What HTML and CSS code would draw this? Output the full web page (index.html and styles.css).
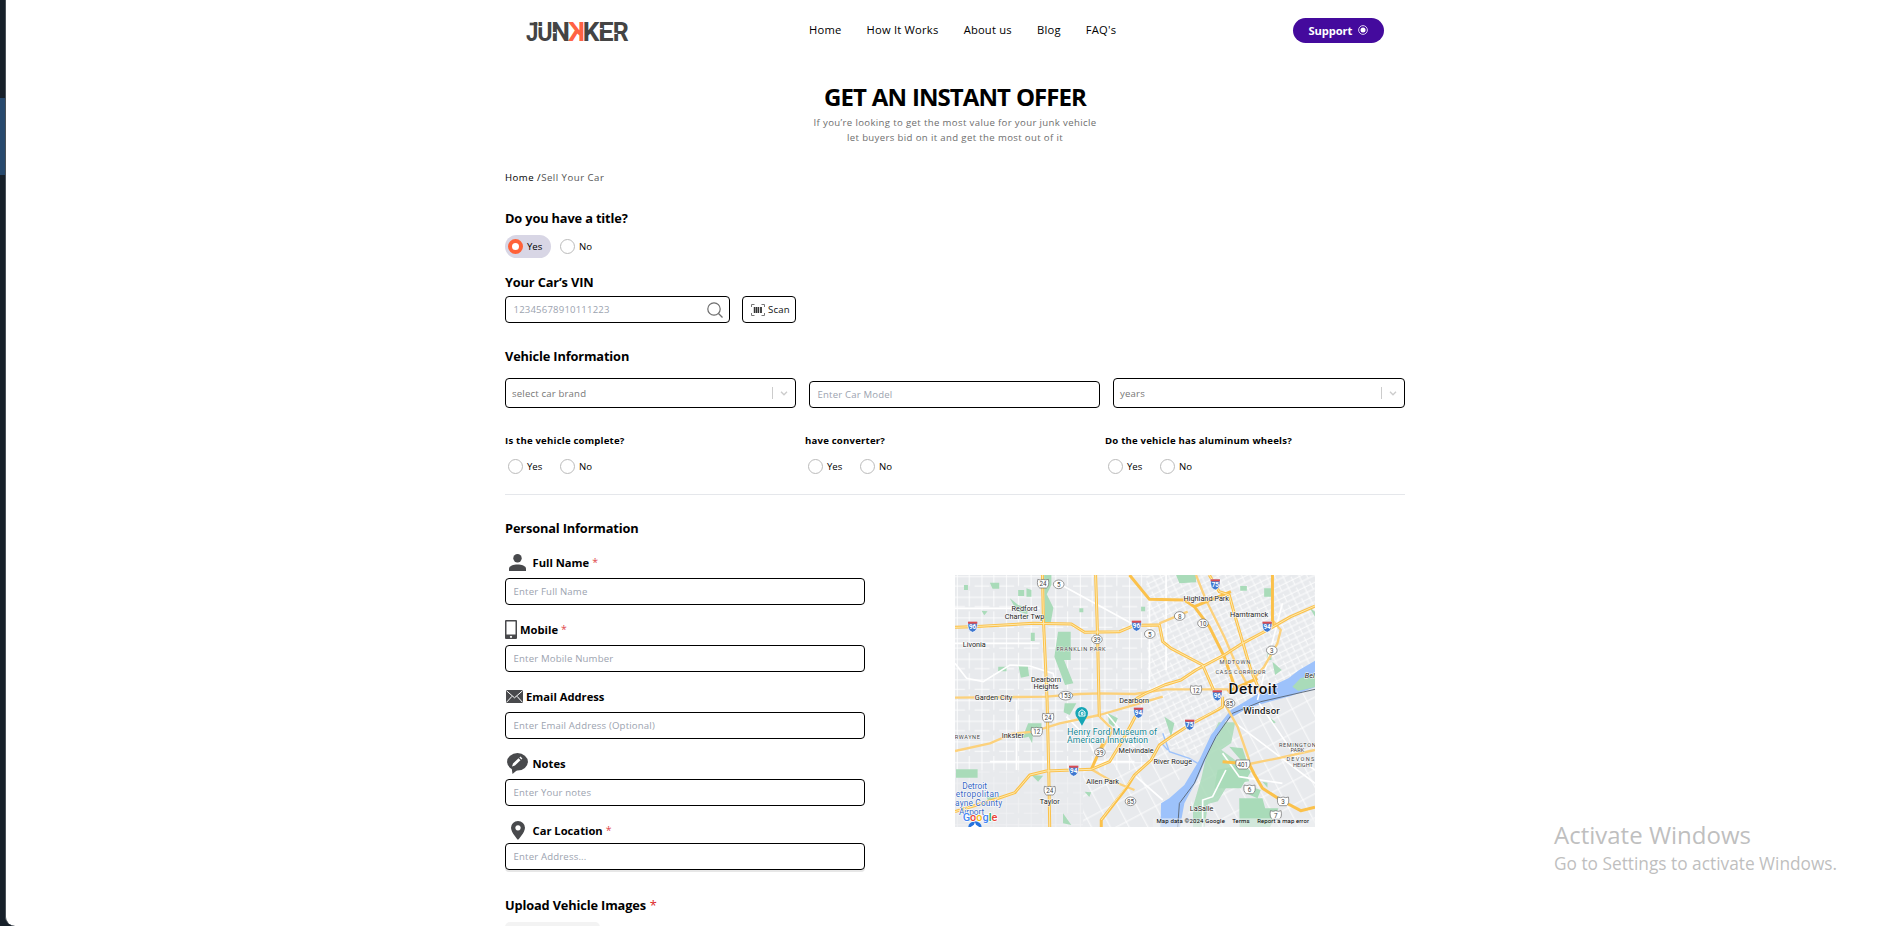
FILE: index.html
```html
<!DOCTYPE html>
<html lang="en">
<head>
<meta charset="utf-8">
<title>Junkker - Sell Your Car</title>
<link rel="stylesheet" href="styles.css">
</head>
<body>
<div class="desktop"><div class="taskbar-item"></div></div>
<div class="page">
<header class="header">
  <svg class="logo" viewBox="0 0 306 60" aria-label="Junkker">
    <g class="logo-text">
      <text x="0" y="58" textLength="37" lengthAdjust="spacingAndGlyphs">J</text>
      <text x="34" y="58" textLength="46" lengthAdjust="spacingAndGlyphs">U</text>
      <text x="76" y="58" textLength="56" lengthAdjust="spacingAndGlyphs">N</text>
      <text class="logo-accent" transform="translate(177 58) scale(-1 1)" x="0" y="0" textLength="50" lengthAdjust="spacingAndGlyphs">K</text>
      <text x="170" y="58" textLength="50" lengthAdjust="spacingAndGlyphs">K</text>
      <text x="217" y="58" textLength="46" lengthAdjust="spacingAndGlyphs">E</text>
      <text x="260" y="58" textLength="48" lengthAdjust="spacingAndGlyphs">R</text>
    </g>
    <path d="M36 14h14M78 32h12M218 20h12M260 34h14" stroke="#fff" stroke-width="4"/>
    <path d="M11 6h23" stroke="#444" stroke-width="8"/>
  </svg>
  <nav class="nav"><a>Home</a><a>How It Works</a><a>About us</a><a>Blog</a><a>FAQ's</a></nav>
  <button class="support"><span>Support</span>
    <svg width="10" height="10" viewBox="0 0 10 10"><circle cx="5" cy="5" r="4.4" fill="none" stroke="#d9cbee" stroke-width="1"/><circle cx="5" cy="5" r="2.5" fill="#fff"/></svg>
  </button>
</header>
<main class="main">
  <h1 class="title">GET AN INSTANT OFFER</h1>
  <p class="subtitle">If you’re looking to get the most value for your junk vehicle<br>let buyers bid on it and get the most out of it</p>
  <div class="crumbs"><b>Home /</b><span>Sell Your Car</span></div>

  <h2 class="heading h-title">Do you have a title?</h2>
  <div class="radios first">
    <label class="radio on"><i></i><span>Yes</span></label><label class="radio"><i></i><span>No</span></label>
  </div>
  <h2 class="heading h-vin">Your Car’s VIN</h2>
  <div class="vin">
    <div class="field vin-input"><span>12345678910111223</span>
      <svg width="16" height="16" viewBox="0 0 16 16" fill="none" stroke="#6d6d6d" stroke-width="1.2"><circle cx="7" cy="7" r="6.2"/><path d="M11.5 11.5l4 4"/></svg>
    </div>
    <div class="field scan">
      <svg width="14" height="12" viewBox="0 0 14 12" fill="none" stroke="#333"><path d="M.5 3V.5h3M10.500 .5h3V3M.5 9v2.500h3M10.500 11.500h3V9" stroke="#777"/><path d="M3.500 3v6M7.500 3v6" stroke-width="1.400"/><path d="M5.500 3v6M10 3v6" stroke-width="1.800"/></svg>
      <span>Scan</span>
    </div>
  </div>
  <h2 class="heading h-vehicle">Vehicle Information</h2>
  <div class="vehicle">
    <div class="field select"><span>select car brand</span><em></em><svg width="8" height="5" viewBox="0 0 8 5"><path d="M1 .8l3 3 3-3" fill="none" stroke="#ccc" stroke-width="1.300"/></svg></div>
    <div class="field"><span>Enter Car Model</span></div>
    <div class="field select"><span>years</span><em></em><svg width="8" height="5" viewBox="0 0 8 5"><path d="M1 .8l3 3 3-3" fill="none" stroke="#ccc" stroke-width="1.300"/></svg></div>
  </div>
  <div class="questions">
    <div><h3>Is the vehicle complete?</h3><div class="radios"><label class="radio"><i></i><span>Yes</span></label><label class="radio"><i></i><span>No</span></label></div></div>
    <div><h3>have converter?</h3><div class="radios"><label class="radio"><i></i><span>Yes</span></label><label class="radio"><i></i><span>No</span></label></div></div>
    <div><h3>Do the vehicle has aluminum wheels?</h3><div class="radios"><label class="radio"><i></i><span>Yes</span></label><label class="radio"><i></i><span>No</span></label></div></div>
  </div>
  <h2 class="heading h-personal">Personal Information</h2>
  <div class="personal">
    <div class="form">
      <div class="group">
        <div class="label"><svg class="ic-user" width="17" height="17" viewBox="0 0 17 17"><circle cx="8.500" cy="4.200" r="4.200"/><path d="M0 17v-2.400C0 11.800 4.500 10.400 8.500 10.400s8.500 1.400 8.500 4.200V17z"/></svg><span>Full Name</span><sup>*</sup></div>
        <div class="field"><span>Enter Full Name</span></div>
      </div>
      <div class="group">
        <div class="label"><svg class="ic-phone" width="12" height="19" viewBox="0 0 12 19"><path fill-rule="evenodd" d="M1 0h10q1 0 1 1v17q0 1-1 1H1q-1 0-1-1V1q0-1 1-1zM1.500 1.500v13h9v-13zM6 15.700a1.100 1.100 0 1 0 .01 0z"/></svg><span>Mobile</span><sup>*</sup></div>
        <div class="field"><span>Enter Mobile Number</span></div>
      </div>
      <div class="group">
        <div class="label"><svg class="ic-mail" width="17" height="13" viewBox="0 0 17 13"><rect width="17" height="13" rx="1"/><path d="M.5.8l8 7 8-7M.5 12.300l5.500-6M16.500 12.300l-5.500-6" fill="none" stroke="#fff" stroke-width="1"/></svg><span>Email Address</span></div>
        <div class="field"><span>Enter Email Address (Optional)</span></div>
      </div>
      <div class="group">
        <div class="label"><svg class="ic-note" width="21" height="21" viewBox="0 0 21 21"><ellipse cx="10.500" cy="8.800" rx="10.400" ry="8.700"/><path d="M4.500 14l1 7 6-5z"/><path d="M5 13.500l1-3 5.500-5.300 2 2L8 12.500zM12.400 4.400l1-1 2 2-1 1z" fill="#fff"/></svg><span>Notes</span></div>
        <div class="field"><span>Enter Your notes</span></div>
      </div>
      <div class="group last">
        <div class="label"><svg class="ic-pin" width="14" height="19" viewBox="0 0 14 19"><path fill-rule="evenodd" d="M7 0a7 6.800 0 0 1 7 6.800C14 11.500 7 19 7 19S0 11.500 0 6.800A7 6.800 0 0 1 7 0zm0 4.200a2.700 2.700 0 1 0 .01 0z"/></svg><span>Car Location</span><sup>*</sup></div>
        <div class="field"><span>Enter Address...</span></div>
      </div>
    </div>
    <svg class="map" width="360" height="252" viewBox="15 15 1083 756" preserveAspectRatio="none">
      <defs>
        <pattern id="gridWest" width="74" height="62" patternUnits="userSpaceOnUse"><path d="M0 20h74M0 48h45M22 0v62M58 0v48" class="minor"/></pattern>
        <pattern id="gridCity" width="44" height="36" patternUnits="userSpaceOnUse" patternTransform="rotate(-26)"><path d="M0 10h44M0 27h44M12 0v36M33 0v27" class="minor"/></pattern>
        <pattern id="gridSouth" width="50" height="64" patternUnits="userSpaceOnUse" patternTransform="rotate(-28)"><path d="M0 20h50M14 0v64" class="minor"/></pattern>
        <g id="interstate"><path d="M-14-15h28q3 28-14 32q-17-4-14-32z" fill="#3f78d0" stroke="#fff" stroke-width="2"/><path d="M-14-15h28v6h-28z" fill="#dc4c50"/></g>
        <g id="usroute"><path d="M-16-13q8 4 16 0q8 4 16 0q4 20-6 26h-20q-10-6-6-26z" fill="#fff" stroke="#666" stroke-width="2"/></g>
        <g id="state"><ellipse rx="16" ry="13" fill="#fff" stroke="#666" stroke-width="2"/></g>
      </defs>
      <rect x="15" y="15" width="1083" height="756" fill="#e8eaed"/>
      <path d="M15 15H600V600H15z" fill="url(#gridWest)"/>
      <path d="M15 600H400V771H15z" fill="url(#gridWest)" opacity=".35"/>
      <path d="M590 15H1098V300L960 365L820 430L740 560L600 500z" fill="url(#gridCity)"/>
      <path d="M600 500L740 560L640 700V771H400V600z" fill="url(#gridSouth)"/>
      <path d="M900 410L1098 350V771H705L745 625L830 450z" fill="url(#gridSouth)"/>
      <g fill="#a9dbb9">
        <path d="M283 15h22v30l-14 28 20 40-8 45h-18zM325 185h38v85l-20 0 28 70-25 5-32-85z"/>
        <path d="M180 85l25 20 28 8v20l-32-10zM205 60h18v18h-18zM230 55l15 5v20h-15zM120 38h28v18h-20zM42 45h12v15h-12zM95 122l18 2-10 12zM243 188h12v25h-12zM206 288h28l4 30-25 5zM145 290h25v14h-25zM389 115h12v12h-12z"/>
        <path d="M235 460l40 0 0 30-25 0-3 30-10-20-20 5zM345 400h35l-20 35-18-8zM475 430l30 15-12 25-15-10zM18 598h65v25H18zM245 615l35 2-15 18zM405 665l20 2-6 14zM110 680h35v15h-30zM340 730l25 35-25-5z"/>
        <path d="M680 15h60v22l-50 3zM873 48h20v14h-20zM945 55h28v25h-28zM575 110h12v14h-12zM940 635l15 3v15zM970 275l28 25-20 15zM955 240h12v30h-12zM1080 110l18 15v15zM645 440l30 20-10 40zM965 445l15 12-10 6z"/>
        <path d="M780 515l28-58 50 0-12 62-30 20 60 45 25 50-65 10-30 50-30 8-10 70h-35v-62l25-85z" opacity=".85"/>
        <path d="M840 530l40 5 15 45-90 20-10 55 80 0 30-50zM870 685h70l8 30 40 0-25 56h-92zM905 650l30 10-10 25-35-15z"/>
      </g>
      <path d="M1098 272L1050 300 1018 325 975 345 920 375 845 420 785 495 750 570 705 645 660 685 635 700 633 771H692L705 700 745 625 785 530 830 452 895 415 960 395 1025 378 1098 352z" fill="#9dc2fb"/>
      <path d="M1030 350l24-25 44-12v38l-50 12z" fill="#a9dbb9"/>
      <path d="M640 490l20 55 60 20 25 15M655 540l-20-22" fill="none" stroke="#9dc2fb" stroke-width="4"/>
      <path d="M1098 358L935 395 850 430 800 500 765 570 735 640 690 700 685 771" fill="none" stroke="#5f6d80" stroke-width="3"/>
      <g fill="none" stroke="#fff" stroke-width="5">
        <path d="M335 45L555 165M15 280L50 325 100 335 180 285 240 288 310 310 320 350M15 115H270M15 220H270M120 575H555M200 390V600M350 440L410 500 440 560M470 430L555 530M830 600L790 680 760 690V771M820 550L870 620 1000 640M860 460L1098 640M930 400L1040 560 1098 600M560 620L640 690M1000 100L925 390M650 15V300M600 90V340"/>
      </g>
      <g class="road-light">
        <path d="M740 15L770 90 825 200 855 270 905 365M15 543L120 520 185 492 250 485 330 460 450 435 570 400 640 380M15 383L290 380 390 372 450 370 555 372 650 358H840M630 160L715 125M970 150L995 180 985 220 945 290 915 325M455 540L490 480 450 440M425 598L480 630 555 660"/>
        <path d="M820 390L865 470 900 570M900 582L985 565 1098 540"/>
      </g>
      <g class="road">
        <path d="M15 172L70 170 250 160 365 162 405 187 510 185 555 166 630 165 640 215 665 235 760 285 795 365"/>
        <path d="M278 15L281 150 292 390 297 600 300 771M438 15L444 200 449 440"/>
        <path d="M15 725L130 690 195 668 240 615 290 603 425 598 480 575 520 510 560 435M535 400L585 372 645 345 695 330 740 300 825 255 880 220 955 180 1025 140 1098 108"/>
        <path d="M780 15L810 65 840 75 855 130 880 215 905 300 935 370M820 380V410L805 420 720 465 665 500 630 525 605 570 555 615 530 655 455 750V771"/>
        <path d="M540 15L600 88 705 90 735 110 780 170 825 260 860 360M735 110L845 65M970 15V165M425 598L460 520M835 365L925 325"/>
        <path d="M820 575L900 582 915 612 940 655 995 690 1055 722 1098 712"/>
      </g>
      <g class="road-core">
        <path d="M15 172L70 170 250 160 365 162 405 187 510 185 555 166 630 165 640 215 665 235 760 285 795 365M278 15L281 150 292 390 297 600 300 771M438 15L444 200 449 440M15 725L130 690 195 668 240 615 290 603 425 598 480 575 520 510 560 435M535 400L585 372 645 345 695 330 740 300 825 255 880 220 955 180 1025 140 1098 108M780 15L810 65 840 75 855 130 880 215 905 300 935 370M820 380V410L720 465 630 525 605 570 555 615 455 750"/>
      </g>
      <g class="shields">
        <use href="#interstate" x="68" y="170"/><text x="68" y="178" class="w">96</text>
        <use href="#interstate" x="561" y="167"/><text x="561" y="175" class="w">96</text>
        <use href="#interstate" x="798" y="43"/><text x="798" y="51" class="w">75</text>
        <use href="#interstate" x="954" y="170"/><text x="954" y="178" class="w">94</text>
        <use href="#interstate" x="804" y="376"/><text x="804" y="384" class="w">96</text>
        <use href="#interstate" x="567" y="428"/><text x="567" y="436" class="w">94</text>
        <use href="#interstate" x="721" y="464"/><text x="721" y="472" class="w">75</text>
        <use href="#interstate" x="372" y="602"/><text x="372" y="610" class="w">94</text>
        <use href="#usroute" x="280" y="41"/><text x="280" y="49">24</text>
        <use href="#usroute" x="295" y="443"/><text x="295" y="451">24</text>
        <use href="#usroute" x="300" y="662"/><text x="300" y="670">24</text>
        <use href="#usroute" x="261" y="485"/><text x="261" y="493">12</text>
        <use href="#usroute" x="740" y="360"/><text x="740" y="368">12</text>
        <use href="#state" x="327" y="43"/><text x="327" y="51">5</text>
        <use href="#state" x="442" y="208"/><text x="442" y="216">39</text>
        <ellipse cx="348" cy="377" rx="21" ry="13" fill="#fff" stroke="#666" stroke-width="2"/><text x="348" y="384">153</text>
        <use href="#state" x="601" y="192"/><text x="601" y="200">5</text>
        <use href="#state" x="691" y="138"/><text x="691" y="146">8</text>
        <use href="#state" x="761" y="160"/><text x="761" y="168">10</text>
        <use href="#state" x="968" y="241"/><text x="968" y="249">3</text>
        <use href="#state" x="841" y="400"/><text x="841" y="408">85</text>
        <use href="#state" x="451" y="547"/><text x="451" y="555">39</text>
        <use href="#state" x="543" y="694"/><text x="543" y="702">85</text>
        <path d="M861 570h40q5 20-8 27h-24q-13-7-8-27z" fill="#fff" stroke="#666" stroke-width="2"/><text x="881" y="591">401</text>
        <use href="#usroute" x="901" y="658"/><text x="901" y="666">6</text>
        <use href="#usroute" x="1002" y="694"/><text x="1002" y="702">3</text>
        <use href="#usroute" x="980" y="735"/><text x="980" y="743">7</text>
      </g>
      <g class="places">
        <text x="224" y="123">Redford</text><text x="224" y="146">Charter Twp</text>
        <text x="73" y="232">Livonia</text><text x="289" y="335">Dearborn</text><text x="289" y="358">Heights</text>
        <text x="131" y="389">Garden City</text><text x="554" y="400">Dearborn</text>
        <text x="189" y="505">Inkster</text><text x="560" y="548">Melvindale</text>
        <text x="459" y="641">Allen Park</text><text x="300" y="703">Taylor</text>
        <text x="771" y="94">Highland Park</text><text x="900" y="140">Hamtramck</text>
        <text x="670" y="582">River Rouge</text><text x="757" y="722">LaSalle</text>
        <text x="1082" y="325" font-style="italic">Bel</text>
      </g>
      <g class="areas">
        <text x="394" y="243" textLength="148">FRANKLIN PARK</text><text x="857" y="282" textLength="92">MIDTOWN</text><text x="874" y="311" textLength="150">CASS CORRIDOR</text>
        <text x="52" y="507" textLength="76">RWAYNE</text><text x="1045" y="531" textLength="110">REMINGTON</text><text x="1045" y="547">PARK</text><text x="1062" y="572" textLength="100">DEVONSH</text><text x="1062" y="590">HEIGHT</text>
      </g>
      <text x="911" y="373" class="city" textLength="146">Detroit</text>
      <text x="937" y="432" class="town" textLength="110">Windsor</text>
      <g class="poi"><text x="488" y="494" textLength="270">Henry Ford Museum of</text><text x="474" y="520" textLength="244">American Innovation</text></g>
      <path d="M397 467L385 447Q377 440 377 430a19 19 0 0 1 38 0q0 10-7 17z" fill="#16a6b6"/>
      <path d="M388 438v-12l9-7 9 7v12zM395 427h5v6h-5z" fill="none" stroke="#fff" stroke-width="3"/>
      <g class="airport"><text x="74" y="656">Detroit</text><text x="82" y="682" textLength="130">etropolitan</text><text x="86" y="709" textLength="142">ayne County</text><text x="65" y="735">Airport</text></g>
      <path d="M55 771a20 17 0 0 1 40 0z" fill="#2673df"/><path d="M75 756l-3 8-10 7h26l-10-7z" fill="#fff"/>
      <rect x="610" y="745" width="488" height="26" fill="#eef0f1" opacity=".6"/>
      <text x="38" y="753" class="google"><tspan fill="#4285f4">G</tspan><tspan fill="#ea4335">o</tspan><tspan fill="#fbbc05">o</tspan><tspan fill="#4285f4">g</tspan><tspan fill="#34a853">l</tspan><tspan fill="#ea4335">e</tspan></text>
      <g class="credits"><text x="621" y="760" textLength="206">Map data ©2024 Google</text><text x="849" y="760" textLength="52">Terms</text><text x="924" y="760" textLength="156">Report a map error</text></g>
    </svg>
  </div>
  <h2 class="heading h-upload">Upload Vehicle Images<b>*</b></h2>
  <div class="upload"></div>
</main>
</div>
<div class="watermark"><p class="w1">Activate Windows</p><p class="w2">Go to Settings to activate Windows.</p></div>
</body>
</html>
```
FILE: styles.css
```css
* { box-sizing: border-box; }
body, h1, h2, h3, p { margin: 0; }
body { height: 926px; overflow: hidden; background: #17202a; font-family: "Open Sans", "Noto Sans", sans-serif; color: #000; font-size: 9.6px; white-space: nowrap; }
.desktop { position: absolute; left: 0; top: 0; width: 6px; height: 926px; padding-top: 98px; }
.taskbar-item { height: 77px; background: #27496d; }
.page { position: relative; margin-left: 5px; height: 926px; background: #fff; border-left: 1px solid #4a5158; border-bottom-left-radius: 10px 9px; overflow: hidden; }
.header { height: 61px; margin-left: 520px; width: 858px; display: flex; align-items: center; }
.logo { width: 102px; height: 20px; margin-top: 3px; overflow: visible; }
.logo-text { font: 700 80px "Roboto", sans-serif; fill: #444; }
.logo-accent { fill: #ff6243; }
.nav { display: flex; gap: 25.2px; margin: -2px 0 0 181px; font-size: 11.2px; font-weight: 500; letter-spacing: .2px; }
.support { margin-left: auto; width: 91px; height: 25px; border: 0; border-radius: 13px; background: #440a9d; color: #fff; font: 700 11.2px "Open Sans", sans-serif; letter-spacing: -.1px; display: flex; align-items: center; gap: 6px; padding: 0 0 1px 15.5px; }
.main { margin-left: 499px; width: 900px; }
.title { font-size: 24px; line-height: 32px; font-weight: 700; letter-spacing: -.93px; word-spacing: .6px; text-align: center; margin-top: 20px; }
.subtitle { font-size: 9.6px; line-height: 15px; text-align: center; color: #6e6e6e; font-weight: 500; letter-spacing: .36px; margin-top: 2px; }
.crumbs { line-height: 16px; margin-top: 25px; display: flex; color: #555; letter-spacing: .5px; }
.crumbs b { font-weight: 500; color: #000; }
.heading { font-size: 12.8px; line-height: 20px; font-weight: 700; letter-spacing: -.15px; }
.h-title { margin-top: 22px; }
.radios { display: flex; gap: 6px; height: 23px; }
.radios.first { margin-top: 7px; }
.radio { display: flex; align-items: center; width: 46px; height: 23px; border-radius: 12px; padding-left: 3px; gap: 4px; }
.radio i { width: 15px; height: 15px; border: 1px solid #bbb; border-radius: 50%; background: #fff; }
.radio.on { background: #d8d6e5; }
.radio.on i { border: 4.5px solid #ff6138; }
.h-vin { margin-top: 14px; }
.field { height: 27px; border: 1px solid #000; border-radius: 4px; background: #fff; display: flex; align-items: center; padding: 0 7.5px; color: #9ca3af; letter-spacing: .17px; }
.vin { display: flex; gap: 12px; margin-top: 4px; }
.vin-input { width: 225px; justify-content: space-between; padding-right: 6.5px; }
.scan { width: 54px; padding: 0 0 0 8px; gap: 3px; color: #111; }
.h-vehicle { margin-top: 23px; }
.vehicle { display: grid; grid-template-columns: 291px 291px 292px; gap: 13px; align-items: end; margin-top: 12px; }
.select { height: 30px; color: #777; padding: 0 7px 0 6px; }
.select em { margin-left: auto; width: 1px; height: 12px; background: #ccc; margin-right: 7px; }
.questions { display: grid; grid-template-columns: repeat(3, 1fr); height: 87px; border-bottom: 1px solid #e5e7eb; padding-top: 24px; }
.questions h3 { font-size: 9.6px; line-height: 17px; font-weight: 700; letter-spacing: .2px; }
.questions .radios { margin-top: 6px; }
.h-personal { margin-top: 23px; }
.personal { display: flex; height: 334px; margin-top: 14px; }
.form { width: 360px; }
.group { height: 67px; }
.label { height: 21px; margin-bottom: 5px; display: flex; align-items: center; font-size: 11.2px; font-weight: 700; }
.label svg { fill: #48494c; }
.label sup { color: #e0474c; font-weight: 400; line-height: 12px; margin: -2px 0 0 3px; font-size: 10.5px; }
.ic-user { margin: 0 6.5px 0 4px; }
.ic-phone { margin-right: 3px; }
.ic-mail { margin: 0 3px 0 1px; }
.ic-note { margin: 0 4.5px 0 2px; }
.ic-pin { margin: 0 7.5px 0 6px; }
.last .label { margin-bottom: 2px; }
.last .field { box-shadow: 0 2px 0 #e7e7e7; }
.map { margin: 23px 0 0 90px; flex: none; }
.h-upload { margin-top: 9px; display: flex; }
.h-upload b { color: #dc2626; margin-left: 4px; font-weight: 500; }
.upload { width: 95px; height: 30px; margin-top: 7px; background: #f3f3f3; border-radius: 5px; }
.watermark { position: absolute; left: 1554px; top: 820px; color: #bfbfbf; }
.w1 { font-size: 24px; line-height: 30px; font-weight: 400; }
.w2 { font-size: 17.3px; line-height: 28px; }
.minor { fill: none; stroke: #fff; stroke-width: 2.5; }
.road { fill: none; stroke: #fbc14b; stroke-width: 9; stroke-linejoin: round; }
.road-light { fill: none; stroke: #fcd17c; stroke-width: 7; stroke-linejoin: round; }
.road-core { fill: none; stroke: #fde9ae; stroke-width: 3; stroke-linejoin: round; }
.map text { font-family: "Roboto", sans-serif; text-anchor: middle; }
.shields text { font-size: 19px; fill: #444; }
.shields text.w { fill: #fff; font-weight: 700; }
.places text { font-size: 22px; fill: #222; stroke: #fff; stroke-width: 3; paint-order: stroke; }
.areas text { font-size: 17px; fill: #444; stroke: #fff; stroke-width: 2; paint-order: stroke; }
.map .city { font-size: 46px; font-weight: 500; fill: #111; stroke: #fff; stroke-width: 4; paint-order: stroke; }
.map .town { font-size: 29px; font-weight: 500; fill: #222; stroke: #fff; stroke-width: 4; paint-order: stroke; }
.poi text { font-size: 26px; fill: #128391; stroke: #fff; stroke-width: 3; paint-order: stroke; }
.airport text { font-size: 25px; fill: #3567c4; stroke: #fff; stroke-width: 3; paint-order: stroke; }
.map .google { font-size: 33px; font-weight: 500; text-anchor: start; stroke: #fff; stroke-width: 4; paint-order: stroke; }
.map .credits text { font-size: 18px; fill: #000; text-anchor: start; }
```
